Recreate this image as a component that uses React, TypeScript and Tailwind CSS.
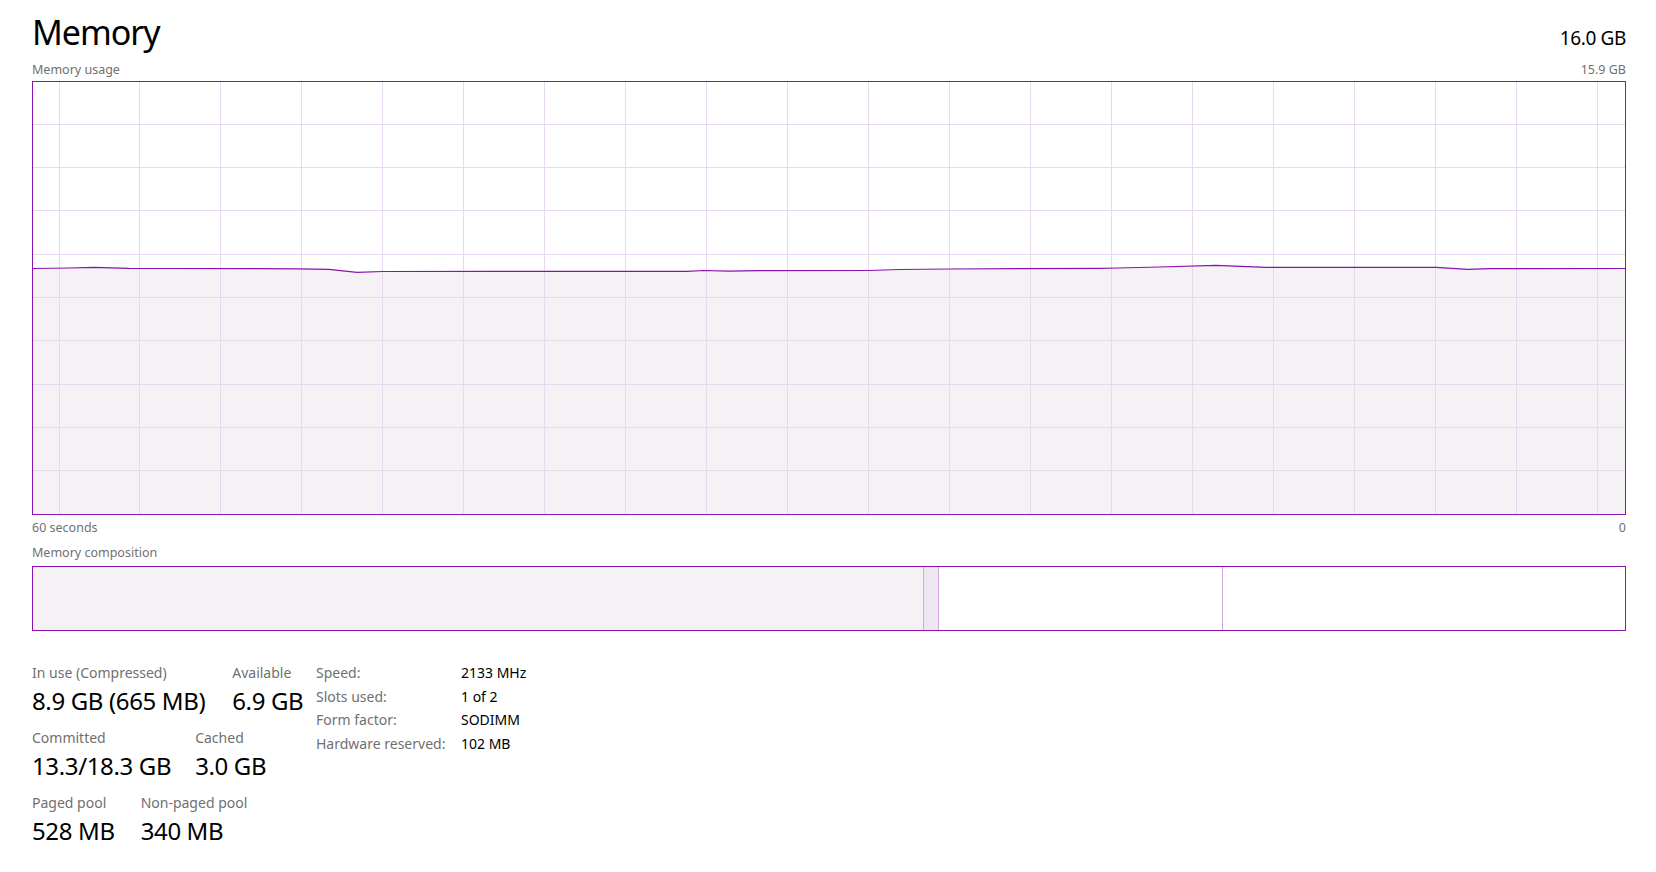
import React from 'react';

// Memory panel of a performance monitor: usage history graph, composition bar and stats.

const GRAPH_W = 1592;
const GRAPH_H = 432;

// usage samples as [x, y] inside the plot area
const usage: [number, number][] = [
    [0, 186.5], [36, 186], [61, 185.3], [96, 186.3], [136, 186.5], [266, 186.8],
    [296, 187.3], [324, 190.3], [349, 189.5], [466, 189.3], [654, 189.3], [671, 188.5],
    [696, 189.2], [726, 188.7], [836, 188.5], [866, 187.5], [916, 187], [1066, 186.3],
    [1085, 186], [1126, 185], [1183, 183.3], [1233, 185.3], [1403, 185.3],
    [1435, 187.3], [1456, 186.7], [GRAPH_W, 186.5],
];

const linePath = usage.map(([x, y], i) => `${i === 0 ? 'M' : 'L'}${x} ${y}`).join(' ');
const areaPath = `${linePath} L${GRAPH_W} ${GRAPH_H} L0 ${GRAPH_H} Z`;

const vLines = Array.from({ length: 20 }, (_, i) => 26 + i * 80.95);
const hLines = Array.from({ length: 9 }, (_, i) => (i + 1) * 43.3 - 1);

const UsageGraph: React.FC = () => (
    <div className="border border-[#8b12ae] w-[1594px] h-[434px] bg-white">
        <svg width={GRAPH_W} height={GRAPH_H} viewBox={`0 0 ${GRAPH_W} ${GRAPH_H}`} className="block">
            <path d={areaPath} fill="#f4f2f4" />
            {vLines.map((x) => (
                <line key={`v${x}`} x1={x} y1={0} x2={x} y2={GRAPH_H} stroke="#e9d9ef" strokeWidth={1} shapeRendering="crispEdges" />
            ))}
            {hLines.map((y) => (
                <line key={`h${y}`} x1={0} y1={y} x2={GRAPH_W} y2={y} stroke="#e9d9ef" strokeWidth={1} shapeRendering="crispEdges" />
            ))}
            <path d={linePath} fill="none" stroke="#8b12ae" strokeWidth={1.2} strokeLinejoin="round" />
        </svg>
    </div>
);

const CompositionBar: React.FC = () => (
    <div className="flex border border-[#8b12ae] w-[1594px] h-[65px]">
        <div className="w-[891px] bg-[#f4f2f4] border-r border-[#cfa6df]" />
        <div className="w-[15px] bg-[#efe6f3] border-r border-[#cfa6df]" />
        <div className="w-[284px] bg-white border-r border-[#cfa6df]" />
        <div className="flex-1 bg-white" />
    </div>
);

const Stat: React.FC<{ label: string; value: string }> = ({ label, value }) => (
    <div className="flex flex-col whitespace-nowrap">
        <div className="text-[14px] leading-[18px] text-[#707070]">{label}</div>
        <div className="mt-[4px] text-[24px] leading-[30px] tracking-[-0.015em] text-black">{value}</div>
    </div>
);

const specs = [
    ['Speed:', '2133 MHz'],
    ['Slots used:', '1 of 2'],
    ['Form factor:', 'SODIMM'],
    ['Hardware reserved:', '102 MB'],
];

export default function App() {
    return (
        <div
            className="w-[1656px] h-[872px] bg-white pl-[32px] pr-[30px] pt-[10px] overflow-hidden"
            style={{ fontFamily: '"Noto Sans", "Open Sans", sans-serif' }}
        >
            <div className="flex items-baseline justify-between w-[1594px]">
                <h1 className="text-[34px] leading-[44px] tracking-[-0.03em] text-black font-normal">Memory</h1>
                <span className="text-[19px] leading-[24px] tracking-[-0.02em] text-black">16.0 GB</span>
            </div>

            <div className="mt-[8px] flex justify-between w-[1594px] text-[12.5px] leading-[16px] text-[#707070]">
                <span>Memory usage</span>
                <span>15.9 GB</span>
            </div>

            <div className="mt-[3px]">
                <UsageGraph />
            </div>

            <div className="mt-[5px] flex justify-between w-[1594px] text-[12.5px] leading-[16px] text-[#707070]">
                <span>60 seconds</span>
                <span>0</span>
            </div>

            <div className="mt-[9px] text-[12.5px] leading-[16px] text-[#707070]">Memory composition</div>

            <div className="mt-[5px]">
                <CompositionBar />
            </div>

            <div className="mt-[30px] flex">
                <div className="w-[284px] shrink-0 pt-[3px] flex flex-col gap-[13px]">
                    <div className="flex gap-[27px]">
                        <Stat label="In use (Compressed)" value="8.9 GB (665 MB)" />
                        <Stat label="Available" value="6.9 GB" />
                    </div>
                    <div className="flex gap-[24px]">
                        <Stat label="Committed" value="13.3/18.3 GB" />
                        <Stat label="Cached" value="3.0 GB" />
                    </div>
                    <div className="flex gap-[26px]">
                        <Stat label="Paged pool" value="528 MB" />
                        <Stat label="Non-paged pool" value="340 MB" />
                    </div>
                </div>

                <div className="flex flex-col text-[14px] leading-[23.7px] whitespace-nowrap">
                    {specs.map(([k, v]) => (
                        <div key={k} className="flex">
                            <span className="w-[145px] text-[#707070]">{k}</span>
                            <span className="text-black">{v}</span>
                        </div>
                    ))}
                </div>
            </div>
        </div>
    );
}
